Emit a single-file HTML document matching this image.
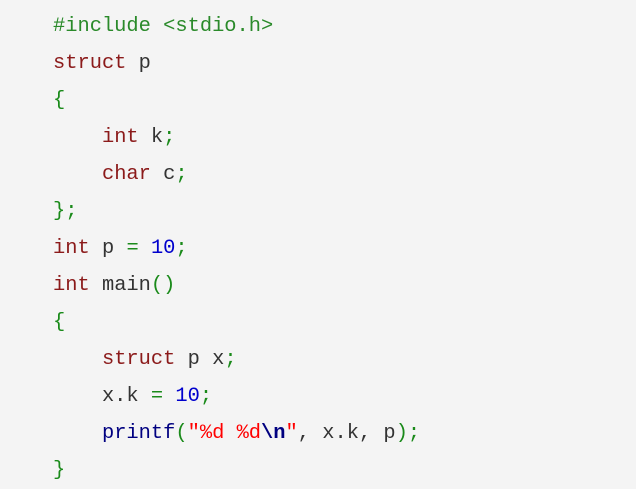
<!DOCTYPE html>
<html><head><style>
html,body{margin:0;padding:0;background:#f4f4f4;width:636px;height:488px;overflow:hidden}
pre{margin:0;position:absolute;left:53px;top:8px;font-family:"Liberation Mono",monospace;font-size:20.4px;line-height:37px;color:#333}
.k{color:#8b1a1a}.g{color:#1a8a1a}.n{color:#0000cd}.s{color:#ff0000}.f{color:#000080}.b{color:#000080;font-weight:bold}.pp{color:#2a8a2a}
</style></head><body>
<pre><span class="pp">#include &lt;stdio.h&gt;</span>
<span class="k">struct</span> p
<span class="g">{</span>
    <span class="k">int</span> k<span class="g">;</span>
    <span class="k">char</span> c<span class="g">;</span>
<span class="g">};</span>
<span class="k">int</span> p <span class="g">=</span> <span class="n">10</span><span class="g">;</span>
<span class="k">int</span> main<span class="g">()</span>
<span class="g">{</span>
    <span class="k">struct</span> p x<span class="g">;</span>
    x.k <span class="g">=</span> <span class="n">10</span><span class="g">;</span>
    <span class="f">printf</span><span class="g">(</span><span class="s">"%d %d</span><span class="b">\n</span><span class="s">"</span>, x.k, p<span class="g">);</span>
<span class="g">}</span></pre>
</body></html>
